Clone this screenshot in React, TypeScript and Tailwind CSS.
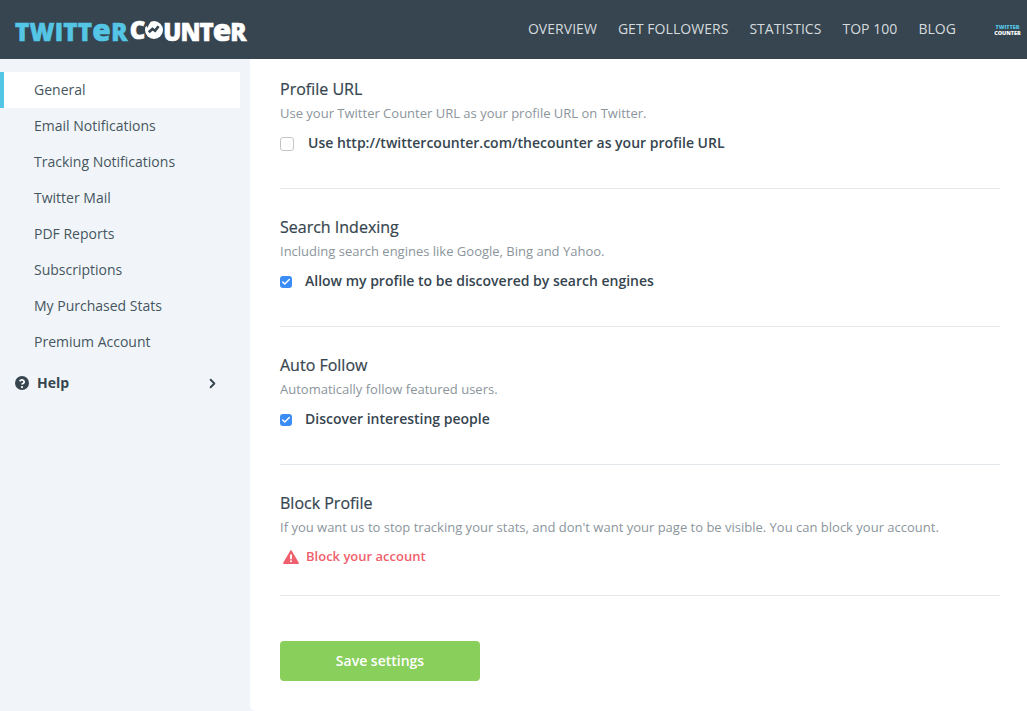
import React from 'react';
import { Check, ChevronRight } from 'lucide-react';

const navItems = [
  'General',
  'Email Notifications',
  'Tracking Notifications',
  'Twitter Mail',
  'PDF Reports',
  'Subscriptions',
  'My Purchased Stats',
  'Premium Account',
];

const topLinks = ['OVERVIEW', 'GET FOLLOWERS', 'STATISTICS', 'TOP 100', 'BLOG'];

const font = { fontFamily: '"Open Sans", sans-serif' };

const CounterO = ({ size }: { size: number }) => (
  <svg width={size} height={size} viewBox="0 0 24 24" className="inline-block shrink-0">
    <circle cx="12" cy="12" r="12" fill="#fff" />
    <path d="M5 15 L10 10.5 L13.5 13 L18 7" fill="none" stroke="#36454f" strokeWidth="3.6" />
    <path d="M0 3 L8 0 L3 9 Z" fill="#36454f" />
  </svg>
);

const Logo = () => (
  <div className="flex h-6 items-center text-[24px] leading-none font-extrabold [-webkit-text-stroke:0.6px]">
    <span className="tracking-[0.3px] text-[#55c5e6]">
      TWITT<span className="text-[30px]">e</span>R
    </span>
    <span className="ml-[2px] text-white">C</span>
    <CounterO size={18} />
    <span className="tracking-[-1px] text-white">
      UNT<span className="text-[30px]">e</span>R
    </span>
  </div>
);

const SmallLogo = () => (
  <div className="flex w-[27px] flex-col items-center text-[5.5px] leading-[6px] font-extrabold">
    <span className="text-[#55c5e6]">TWITTER</span>
    <span className="text-white">COUNTER</span>
  </div>
);

const Checkbox = ({ checked }: { checked?: boolean }) =>
  checked ? (
    <span className="flex h-3 w-3 translate-y-px items-center justify-center rounded-[3px] bg-[#3b8cf5]">
      <Check className="h-[10px] w-[10px] text-white" strokeWidth={3.5} />
    </span>
  ) : (
    <span className="h-[14px] w-[14px] translate-y-px rounded-[3px] border border-[#c4c4c4] bg-white" />
  );

const Section = ({
  title,
  desc,
  children,
  last,
}: {
  title: string;
  desc: string;
  children: React.ReactNode;
  last?: boolean;
}) => (
  <section className={`mb-[26px] border-b border-[#e3e8ec] ${last ? 'pb-[28px]' : 'pb-[35px]'}`}>
    <h2 className="text-base leading-6 font-medium text-[#36454f] [-webkit-text-stroke:0.2px]">{title}</h2>
    <p className="mt-[3px] text-[13px] leading-[18px] text-[#8b959c]">{desc}</p>
    {children}
  </section>
);

export default function App() {
  return (
    <div style={font} className="flex h-[711px] w-[1027px] flex-col overflow-hidden bg-[#f1f5f9]">
      <header className="flex h-[59px] shrink-0 items-center justify-between bg-[#36454f] pr-[6px] pl-[15px]">
        <Logo />
        <nav className="flex items-center pb-[2px]">
          {topLinks.map((l) => (
            <a key={l} className="mr-[21px] text-sm tracking-[0.04px] text-[#d5dade]">
              {l}
            </a>
          ))}
          <div className="ml-[17px] pt-[2px]">
            <SmallLogo />
          </div>
        </nav>
      </header>

      <div className="flex min-h-0 flex-1">
        <aside className="w-[250px] shrink-0 pt-[13px]">
          {navItems.map((item, i) => (
            <div
              key={item}
              className={`flex h-9 w-[240px] items-center pl-[34px] text-sm text-[#465660] ${
                i === 0 ? 'border-l-4 border-[#55c5e6] bg-white !pl-[30px]' : ''
              }`}
            >
              {item}
            </div>
          ))}
          <div className="mt-[5px] flex h-9 w-[240px] items-center pl-[15px] text-[#36454f]">
            <svg width="14" height="14" viewBox="0 0 24 24" fill="none" className="shrink-0">
              <circle cx="12" cy="12" r="12" fill="#36454f" />
              <path
                d="M8.2 9.2a3.9 3.9 0 0 1 7.6 1.1c0 2.4-3.8 2.7-3.8 4.4"
                stroke="#fff"
                strokeWidth="3"
              />
              <circle cx="12" cy="19" r="1.9" fill="#fff" />
            </svg>
            <span className="ml-2 text-sm font-bold">Help</span>
            <ChevronRight className="mr-5 ml-auto h-[15px] w-[15px]" strokeWidth={3} />
          </div>
        </aside>

        <main className="flex-1 rounded-bl-md bg-white pt-[18px] pr-[27px] pl-[30px]">
          <Section title="Profile URL" desc="Use your Twitter Counter URL as your profile URL on Twitter.">
            <label className="mt-[11px] flex h-5 items-center text-sm font-semibold text-[#36454f]">
              <span className="flex w-[28px]">
                <Checkbox />
              </span>
              Use http://twittercounter.com/thecounter as your profile URL
            </label>
          </Section>

          <Section title="Search Indexing" desc="Including search engines like Google, Bing and Yahoo.">
            <label className="mt-[11px] flex h-5 items-center text-sm font-semibold text-[#36454f]">
              <span className="flex w-[25px]">
                <Checkbox checked />
              </span>
              Allow my profile to be discovered by search engines
            </label>
          </Section>

          <Section title="Auto Follow" desc="Automatically follow featured users.">
            <label className="mt-[11px] flex h-5 items-center text-sm font-semibold text-[#36454f]">
              <span className="flex w-[25px]">
                <Checkbox checked />
              </span>
              Discover interesting people
            </label>
          </Section>

          <Section
            last
            title="Block Profile"
            desc="If you want us to stop tracking your stats, and don't want your page to be visible. You can block your account."
          >
            <div className="mt-[11px] flex h-5 items-center text-[13px] font-semibold text-[#f0606c]">
              <svg width="16" height="14" viewBox="0 0 16 14" className="ml-[3px] shrink-0">
                <path
                  d="M8 .8 15.2 13.2H.8Z"
                  fill="#f0606c"
                  stroke="#f0606c"
                  strokeWidth="1.4"
                  strokeLinejoin="round"
                />
                <path d="M8 4.5v4.8" stroke="#fff" strokeWidth="1.9" />
                <circle cx="8" cy="11.2" r="1" fill="#fff" />
              </svg>
              <span className="ml-[7px]">Block your account</span>
            </div>
          </Section>

          <button className="mt-[19px] h-10 w-[200px] rounded-[4px] bg-[#88cf5c] text-sm font-semibold text-white">
            Save settings
          </button>
        </main>
      </div>
    </div>
  );
}
